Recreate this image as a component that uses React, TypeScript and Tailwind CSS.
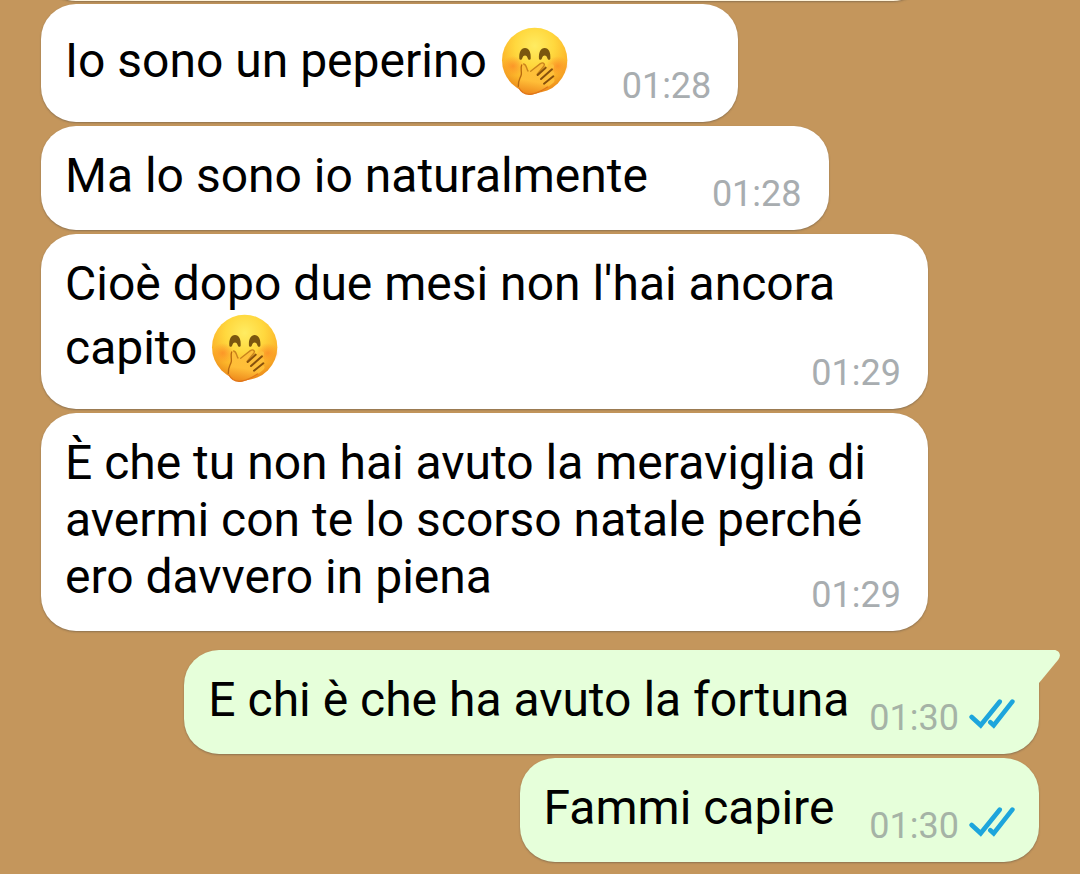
import React, { useId } from 'react';

type Message = {
  id: number;
  text: string;
  time: string;
  emoji?: boolean;
  sent?: boolean;
  tail?: boolean;
  // long messages wrap and let the time sit beside the last line
  long?: boolean;
  gap?: string;
};

const messages: Message[] = [
  { id: 1, text: 'Io sono un peperino', emoji: true, time: '01:28', gap: 'gap-[53px]' },
  { id: 2, text: 'Ma lo sono io naturalmente', time: '01:28', gap: 'gap-16' },
  {
    id: 3,
    text: "Cioè dopo due mesi non l'hai ancora capito",
    emoji: true,
    time: '01:29',
    long: true,
  },
  {
    id: 4,
    text: 'È che tu non hai avuto la meraviglia di avermi con te lo scorso natale perché ero davvero in piena',
    time: '01:29',
    long: true,
  },
  {
    id: 5,
    text: 'E chi è che ha avuto la fortuna',
    time: '01:30',
    sent: true,
    tail: true,
    gap: 'gap-5',
  },
  { id: 6, text: 'Fammi capire', time: '01:30', sent: true, gap: 'gap-[35px]' },
];

function GiggleEmoji() {
  const id = useId();
  const face = `${id}-face`;
  const blush = `${id}-blush`;
  const hand = `${id}-hand`;

  return (
    <svg
      className="ml-0.5 inline-block h-[71px] w-[68px] align-[-19px]"
      viewBox="30 30 204 213"
      role="img"
      aria-label="Faccina che ride con la mano sulla bocca"
    >
      <defs>
        <radialGradient id={face} cx="0.5" cy="0.28" r="0.74">
          <stop offset="0" stopColor="#ffec62" />
          <stop offset="0.4" stopColor="#ffd83e" />
          <stop offset="0.72" stopColor="#fcb62a" />
          <stop offset="1" stopColor="#e98417" />
        </radialGradient>
        <radialGradient id={blush}>
          <stop offset="0" stopColor="#fb7a22" stopOpacity="0.6" />
          <stop offset="1" stopColor="#fb7a22" stopOpacity="0" />
        </radialGradient>
        <linearGradient id={hand} x1="0.6" y1="0" x2="0.4" y2="1">
          <stop offset="0" stopColor="#fdc03a" />
          <stop offset="0.6" stopColor="#ffbe38" />
          <stop offset="1" stopColor="#ee8a1c" />
        </linearGradient>
      </defs>
      <circle cx="131" cy="136" r="98" fill={`url(#${face})`} />
      <ellipse cx="66" cy="153" rx="34" ry="30" fill={`url(#${blush})`} />
      <ellipse cx="200" cy="153" rx="34" ry="30" fill={`url(#${blush})`} />
      <path
        d="M85 132C83 113 90 99 102 99C114 99 121 113 119 132C115 137 111 134 110 129C107 119 97 119 94 129C93 134 89 137 85 132Z"
        fill="#7a560f"
      />
      <path
        d="M144 132C142 113 149 99 161 99C173 99 180 113 178 132C174 137 170 134 169 129C166 119 156 119 153 129C152 134 148 137 144 132Z"
        fill="#7a560f"
      />
      <path
        d="M94 148C87 155 92 166 91 177C89 189 80 196 82 214C86 232 105 241 124 238C142 236 155 226 168 218L187 203C194 197 190 187 183 189L187 183C194 173 187 165 180 171L187 161C193 150 184 144 175 151L160 163L163 152C163 141 154 141 147 146L119 169L110 164C109 155 103 142 94 148Z"
        fill={`url(#${hand})`}
      />
      <path
        d="M92 150C88 158 92 168 91 178C89 189 80 196 82 214"
        fill="none"
        stroke="#b8690f"
        strokeWidth="4"
        strokeLinecap="round"
      />
      <path
        d="M98 147C107 149 106 161 111 168M119 169L148 146C156 141 163 146 159 153L138 178"
        fill="none"
        stroke="#c9841c"
        strokeWidth="4"
        strokeLinecap="round"
      />
      <path
        d="M140 180L164 158M150 192L183 163M159 206L187 184"
        fill="none"
        stroke="#87500c"
        strokeWidth="6"
        strokeLinecap="round"
      />
      <path
        d="M84 219C93 236 109 240 124 237C144 233 156 224 170 216"
        fill="none"
        stroke="#e0761a"
        strokeWidth="4"
        strokeLinecap="round"
      />
    </svg>
  );
}

function ReadTicks() {
  return (
    <svg className="h-8 w-[46px]" viewBox="328 174 138 96" role="img" aria-label="Letto">
      <g fill="none" stroke="#1da5dc" strokeWidth="14" strokeLinejoin="miter">
        <path d="M336 231L363 256L420 185" strokeLinecap="round" />
        <path d="M392 247L402 256L458 185" strokeLinecap="round" />
      </g>
    </svg>
  );
}

function Tail() {
  return (
    <svg
      className="absolute top-0 left-full -ml-px h-[34px] w-[22px]"
      viewBox="0 0 22 34"
      aria-hidden="true"
    >
      <path d="M0 0H16C21 0 24 5 20 10L1 33H0Z" fill="#e6ffda" />
    </svg>
  );
}

function Bubble({ message }: { message: Message }) {
  const { text, time, emoji, sent, tail, long, gap } = message;
  return (
    <li
      className={[
        'relative flex max-w-[887px] rounded-[35px] pt-[21px] pb-4 pl-6 shadow-[0_1px_2px_rgba(60,60,60,0.4)]',
        sent ? 'self-end bg-[#e6ffda] pr-6' : 'self-start bg-white pr-[27px]',
        tail ? 'mt-[15px] rounded-tr-none' : '',
        long ? 'flex-col' : 'items-end',
        gap ?? '',
      ].join(' ')}
    >
      <p className="pb-2.5 text-[48px] leading-[57px] text-black">
        {text}
        {emoji && <> <GiggleEmoji /></>}
      </p>
      <div
        className={[
          'flex h-10 shrink-0 gap-2.5 text-[36px] leading-10',
          sent ? 'text-[#a5b3a6]' : 'text-[#a8adb0]',
          long ? '-mt-10 self-end' : '',
        ].join(' ')}
      >
        <time>{time}</time>
        {sent && <ReadTicks />}
      </div>
      {tail && <Tail />}
    </li>
  );
}

export default function App() {
  return (
    <main className="min-h-screen overflow-hidden bg-[#c4965c] font-['Roboto',sans-serif]">
      <ul className="flex flex-col gap-1 px-[41px] pb-3">
        {/* end of the message scrolled past the top */}
        <li className="-mt-[72px] -mb-px h-[73px] w-full max-w-[887px] rounded-[35px] bg-[#fff3da] shadow-[0_1px_2px_rgba(60,60,60,0.4)]" />
        {messages.map((message) => (
          <Bubble key={message.id} message={message} />
        ))}
      </ul>
    </main>
  );
}
